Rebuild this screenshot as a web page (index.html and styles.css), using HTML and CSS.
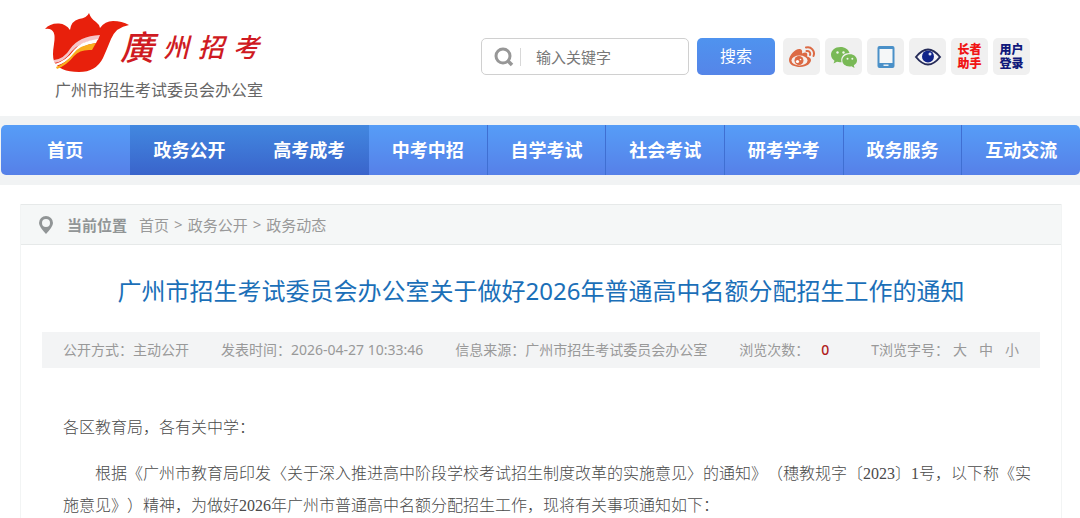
FILE: index.html
```html
<!DOCTYPE html>
<html lang="zh-CN">
<head>
<meta charset="utf-8">
<meta name="viewport" content="width=device-width, initial-scale=1">
<title>广州市招生考试委员会办公室</title>
<link rel="stylesheet" href="styles.css">
</head>
<body>
<header class="header">
  <div class="brand">
    <div class="brand-top">
      <svg class="brand-mark" viewBox="0 0 84 60" aria-hidden="true">
        <path fill="#e8200c" d="M0 16Q5 10 14 10.500Q21 11 25 17Q26 8 34 6Q42 5 44 0Q46 6 51 9Q54 11 55 15Q60 8 68 8Q77 8 84 12Q71 14 66 26Q62 36 58 45Q51 59 34 59Q14 59 9 48Q7 43 9 31Q12 14 0 16Z"/>
        <path fill="#f6c6c8" d="M9 47Q19 46 25 36Q34 23 55 22L53 27Q36 28 27 38Q19 49 9 50Z"/>
        <path fill="#fff" d="M10 51Q22 47 29 37Q36 28 53 26L51 30Q36 32 29 41Q21 50 11 53Z"/>
        <path fill="#f9ae1e" d="M11 54Q21 50 28 41Q34 32 51 30L47 37Q35 36 29 43Q22 52 12 56Z"/>
      </svg>
      <span class="brand-script"><span class="script-large">廣</span><span>州</span><span>招</span><span>考</span></span>
    </div>
    <div class="brand-name">广州市招生考试委员会办公室</div>
  </div>
  <div class="tools">
    <form class="search">
      <label class="search-box">
        <svg class="search-icon" viewBox="0 0 20 20" aria-hidden="true"><circle cx="9" cy="9" r="7" fill="none" stroke="#979797" stroke-width="3"/><path d="M14 14L18 18" stroke="#979797" stroke-width="3.500"/></svg>
        <input class="search-input" type="text" placeholder="输入关键字" aria-label="输入关键字">
      </label>
      <button class="search-button" type="button">搜索</button>
    </form>
    <a class="tile" href="#" aria-label="微博">
      <svg viewBox="0 0 28 24" aria-hidden="true">
        <path fill="#dc6a44" d="M12 4C8 3 1 10 1 15C1 20 7 22 12 22C19 22 23 18 23 15C23 13 21 12 19 11.500C20 9 19 6 14 8.500C14.500 6 14 4.500 12 4Z"/>
        <ellipse cx="11.500" cy="15.500" rx="8" ry="5" fill="#f5efec"/>
        <circle cx="11" cy="15.500" r="4.500" fill="#dc6a44"/><circle cx="9.500" cy="16.500" r="1.600" fill="#fff"/><circle cx="12.500" cy="14.500" r=".8" fill="#fff"/>
        <path d="M18 2.500C23 1 27.500 6 25.500 11M18.500 6C21 5.500 22.800 7.500 22 10" fill="none" stroke="#dc6a44" stroke-width="2" stroke-linecap="round"/>
      </svg>
    </a>
    <a class="tile" href="#" aria-label="微信">
      <svg viewBox="0 0 28 24" aria-hidden="true">
        <path fill="#79b956" d="M10.500 2C5 2 1 5.500 1 9.800C1 12.300 2.500 14.500 4.500 15.800L3.500 18.500L7 16.800Q9 17.500 11.500 17.200C10 11 15 7.800 19.500 8C18.500 4.500 15 2 10.500 2Z"/>
        <path fill="#79b956" d="M20 9.300C15.500 9.300 12.300 12 12.300 15.600C12.300 19.300 16 22.200 21.500 21.300L24.500 23L23.800 20.300C25.800 19.200 27 17.500 27 15.600C27 12 24 9.300 20 9.300Z"/>
        <g fill="#eef5ea"><circle cx="7.500" cy="7.500" r="1.200"/><circle cx="13.500" cy="7.500" r="1.200"/><circle cx="17.500" cy="13.800" r="1"/><circle cx="22.300" cy="13.800" r="1"/></g>
      </svg>
    </a>
    <a class="tile" href="#" aria-label="手机版">
      <svg viewBox="0 0 28 24" aria-hidden="true">
        <rect x="5.500" y="1" width="17" height="22" rx="2" fill="#4a90c8"/><rect x="7.500" y="4" width="13" height="14" fill="#f5f7f8"/><rect x="11.500" y="19.500" width="5" height="1.500" fill="#e6eef4"/>
      </svg>
    </a>
    <a class="tile" href="#" aria-label="无障碍">
      <svg viewBox="0 0 28 24" aria-hidden="true">
        <path d="M2 12Q8 4.500 14 4.500T26 12Q20 19.500 14 19.500T2 12Z" fill="#f4f4f8" stroke="#252b58" stroke-width="2"/><circle cx="14" cy="11.500" r="6" fill="#10248a"/><circle cx="16" cy="9" r="1.500" fill="#dfe4f5"/>
      </svg>
    </a>
    <a class="tile tile-senior" href="#">长者<br>助手</a>
    <a class="tile tile-login" href="#">用户<br>登录</a>
  </div>
</header>

<div class="nav-band">
  <nav class="nav">
    <a class="nav-item nav-home" href="#">首页</a>
    <a class="nav-item nav-active" href="#">政务公开</a>
    <a class="nav-item nav-active" href="#">高考成考</a>
    <a class="nav-item" href="#">中考中招</a>
    <a class="nav-item nav-divided" href="#">自学考试</a>
    <a class="nav-item nav-divided" href="#">社会考试</a>
    <a class="nav-item nav-divided" href="#">研考学考</a>
    <a class="nav-item nav-divided" href="#">政务服务</a>
    <a class="nav-item nav-divided" href="#">互动交流</a>
  </nav>
</div>

<main class="panel">
  <div class="crumbs">
    <svg class="pin" viewBox="0 0 14 18" aria-hidden="true"><path fill="#919596" fill-rule="evenodd" d="M7 0A7 7 0 0 1 14 7Q14 10.500 7 18Q0 10.500 0 7A7 7 0 0 1 7 0ZM7 3A4 4 0 1 0 7 11A4 4 0 1 0 7 3Z"/></svg>
    <strong class="crumbs-label">当前位置</strong>
    <span class="crumbs-path"><a href="#">首页</a><span>&gt;</span><a href="#">政务公开</a><span>&gt;</span><a href="#">政务动态</a></span>
  </div>
  <article class="article">
    <h1 class="title">广州市招生考试委员会办公室关于做好2026年普通高中名额分配招生工作的通知</h1>
    <div class="meta">
      <span>公开方式：主动公开</span>
      <span>发表时间：2026-04-27 10:33:46</span>
      <span>信息来源：广州市招生考试委员会办公室</span>
      <span class="views">浏览次数：<b class="count">0</b></span>
      <span class="sizes-group"><span>T浏览字号：</span><span class="sizes"><a href="#">大</a><a href="#">中</a><a href="#">小</a></span></span>
    </div>
    <div class="content">
      <p>各区教育局，各有关中学：</p>
      <p class="indent">根据《广州市教育局印发〈关于深入推进高中阶段学校考试招生制度改革的实施意见〉的通知》（穗教规字〔2023〕1号，以下称《实施意见》）精神，为做好2026年广州市普通高中名额分配招生工作，现将有关事项通知如下：</p>
    </div>
  </article>
</main>
</body>
</html>
```
FILE: styles.css
```css
* { box-sizing: border-box; }
body {
  margin: 0;
  background: #fff;
  color: #999;
  font-family: "Noto Sans", "Noto Sans CJK SC", sans-serif;
  font-size: 15px;
}
a { color: inherit; text-decoration: none; }

.header {
  display: flex;
  justify-content: space-between;
  align-items: flex-start;
  height: 116px;
  padding: 13px 50px 0 45px;
}
.brand-top { display: flex; align-items: flex-start; height: 65px; }
.brand-mark { width: 84px; height: 60px; }
.brand-script {
  display: flex;
  align-items: center;
  gap: 9px;
  height: 65px;
  margin-left: -9px;
  color: #cf1a22;
  font-family: "Noto Sans CJK TC", sans-serif;
  font-size: 26px;
  font-style: italic;
  font-weight: 500;
}
.script-large { font-size: 34px; }
.brand-name {
  padding-left: 10px;
  color: #666;
  font-size: 16px;
  line-height: 24px;
}

.tools { display: flex; gap: 5px; padding-top: 25px; }
.search { display: flex; gap: 8px; margin-right: 3px; }
.search-box {
  display: flex;
  align-items: center;
  width: 208px;
  height: 37px;
  padding: 0 12px;
  border: 1px solid #d0d0d0;
  border-radius: 5px;
}
.search-icon { flex: none; width: 20px; height: 20px; }
.search-input {
  min-width: 0;
  width: 100%;
  height: 18px;
  margin-left: 6px;
  padding: 0 0 0 15px;
  border: 0;
  border-left: 1px solid #d8d8d8;
  background: none;
  color: #777;
  font: 15px/18px "Noto Sans", "Noto Sans CJK SC", sans-serif;
}
.search-input::placeholder { color: #777; }
.search-button {
  width: 78px;
  height: 37px;
  padding: 0;
  border: 0;
  border-radius: 5px;
  background: linear-gradient(#4f93ef, #5585e8);
  color: #fff;
  font: 16px/37px "Noto Sans", "Noto Sans CJK SC", sans-serif;
}
.tile {
  display: flex;
  align-items: center;
  justify-content: center;
  width: 37px;
  height: 37px;
  border-radius: 5px;
  background: #f0f0f0;
  font-size: 12px;
  font-weight: 900;
  line-height: 14px;
}
.tile svg { width: 28px; height: 24px; }
.tile-senior { color: #f01414; }
.tile-login { color: #10187a; }

.nav-band { padding: 9px 0 10px 1px; background: #f1f3f4; }
.nav {
  display: flex;
  height: 50px;
  border-radius: 5px;
  overflow: hidden;
  background: linear-gradient(#569df7, #5680e8);
}
.nav-item {
  flex: 118 1 0;
  color: #fff;
  font-size: 18px;
  font-weight: 700;
  line-height: 50px;
  text-align: center;
}
.nav-home { flex-grow: 129; }
.nav-active { flex-grow: 120; background: linear-gradient(#4288e0, #3a64cb); }
.nav-divided { border-left: 1px solid #3f6fd2; }

.panel {
  margin: 19px 18px 0 20px;
  border: solid #f2f4f4;
  border-width: 0 1px;
}
.crumbs {
  display: flex;
  align-items: center;
  height: 41px;
  padding-left: 18px;
  border-top: 1px solid #e6e9e9;
  border-bottom: 1px solid #e6e9e9;
  background: #f5f7f7;
}
.pin { width: 14px; height: 18px; }
.crumbs-label { margin: 0 12px 0 14px; color: #919596; }
.crumbs-path { display: flex; gap: 5px; }
.article { padding: 0 21px; }
.title {
  margin: 28px 0 23px;
  color: #1b6fb8;
  font-size: 24px;
  font-weight: 400;
  line-height: 36px;
  text-align: center;
  white-space: nowrap;
}
.meta {
  display: flex;
  gap: 32px;
  height: 36px;
  padding: 0 21px;
  background: #f3f4f5;
  font-size: 14px;
  line-height: 36px;
  white-space: nowrap;
}
.views { display: flex; gap: 12px; margin-right: 10px; }
.count { color: #b01c1c; font-weight: 500; }
.sizes-group { display: flex; gap: 4px; }
.sizes { display: flex; gap: 12px; }
.content {
  padding: 44px 0 0 21px;
  color: #4a4a4a;
  font-family: "Liberation Serif", "Noto Sans CJK SC", serif;
  font-size: 16px;
  font-weight: 300;
  line-height: 32px;
  text-spacing-trim: space-all;
}
.content p { margin: 0 0 14px; }
.content .indent { text-indent: 2em; }
```
